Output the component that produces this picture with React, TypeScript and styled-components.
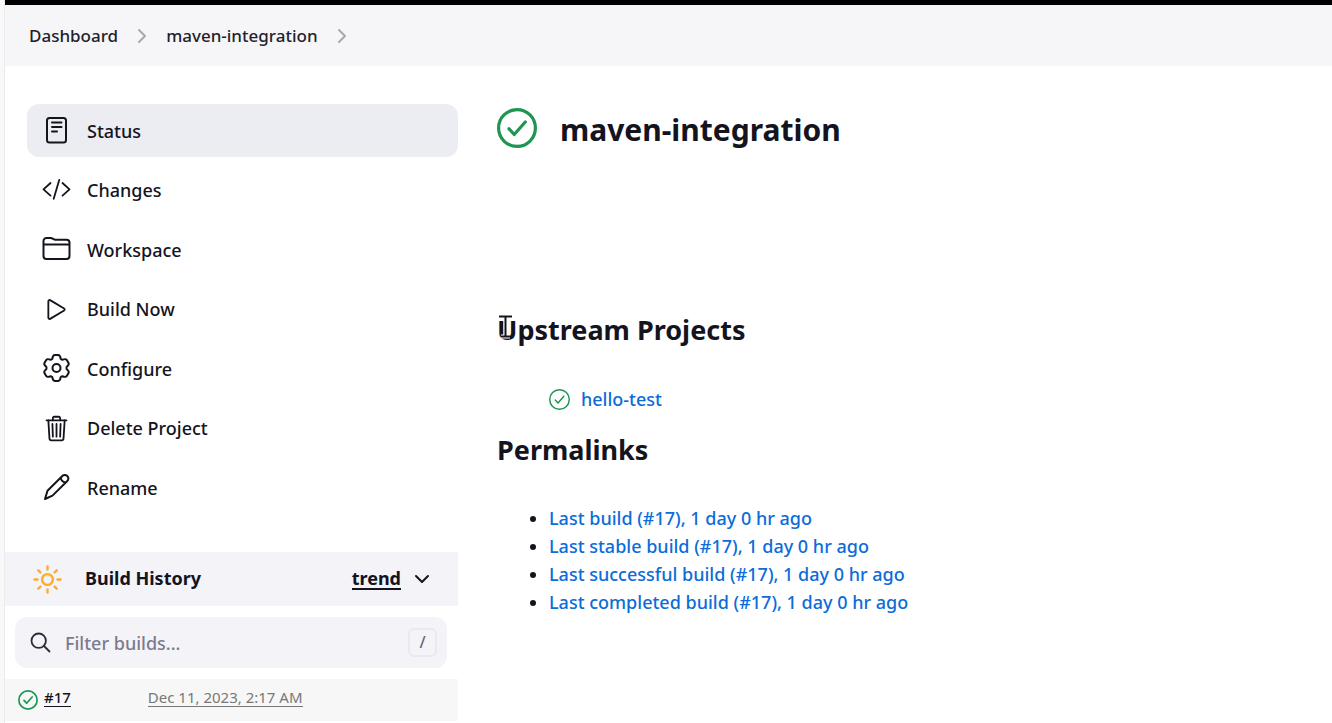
import React from "react";
import styled, { createGlobalStyle } from "styled-components";
import { IoTrashOutline, IoPlayOutline } from "react-icons/io5";

const Global = createGlobalStyle`
  * { box-sizing: border-box; }
  body {
    margin: 0;
    background: #fff;
    color: #14141f;
    font-family: "Noto Sans", "Open Sans", sans-serif;
    font-size: 18px;
    font-weight: 500;
    line-height: 28px;
  }
  a { color: inherit; text-decoration: none; }
  h1, h2, ul { margin: 0; padding: 0; }
`;

const Page = styled.div`
  min-height: 100vh;
  border-left: 4px solid #f8f8f8;
  box-shadow: inset 1px 0 #ebebeb;
  padding-left: 1px;
`;

const TopBar = styled.header`
  height: 5px;
  background: #000;
`;

const Breadcrumbs = styled.nav`
  display: flex;
  align-items: center;
  height: 61px;
  padding: 0 24px;
  background: #f6f6f8;
  color: #22222c;
  font-size: 17px;
  svg { margin: 0 18px; }
`;

const Columns = styled.div`
  display: flex;
`;

const Sidebar = styled.aside`
  flex: 0 0 453px;
  padding-top: 38px;
`;

const Tasks = styled.nav`
  display: flex;
  flex-direction: column;
  justify-content: space-between;
  min-height: 410px;
  margin: 0 0 38px 22px;
`;

const Task = styled.a<{ $active?: boolean }>`
  display: flex;
  align-items: center;
  gap: 16px;
  height: 53px;
  padding: 0 15px;
  border-radius: 12px;
  background: ${(p) => (p.$active ? "#ecedf3" : "transparent")};
  svg { width: 29px; height: 29px; }
`;

const HistoryHeader = styled.div`
  display: flex;
  align-items: center;
  height: 54px;
  padding: 0 28px;
  background: #f3f3f8;
  font-weight: 700;
`;

const HistoryTitle = styled.h2`
  flex: 1;
  margin-left: 23px;
  padding-bottom: 2px;
  font-size: 18px;
`;

const Trend = styled.a`
  margin-right: 13px;
  line-height: 20px;
  border-bottom: 2px solid #14141f;
`;

const IconButton = styled.button`
  display: flex;
  padding: 0;
  border: 0;
  background: none;
  color: inherit;
`;

const Search = styled.label`
  display: flex;
  align-items: center;
  height: 51px;
  margin: 11px 11px 11px 10px;
  padding: 0 10px 0 15px;
  border-radius: 12px;
  background: #f3f3f8;
`;

const SearchInput = styled.input`
  flex: 1;
  min-width: 0;
  margin-left: 14px;
  padding: 0;
  border: 0;
  outline: 0;
  background: none;
  color: inherit;
  font: inherit;
  &::placeholder { color: #7b7b8e; opacity: 1; }
`;

const Key = styled.kbd`
  width: 29px;
  height: 29px;
  border: 2px solid #e9e9f0;
  border-radius: 6px;
  color: #66667a;
  font: inherit;
  font-size: 16px;
  line-height: 25px;
  text-align: center;
`;

const BuildRow = styled.div`
  display: flex;
  align-items: center;
  height: 42px;
  padding: 0 13px;
  background: #f7f7f7;
  font-size: 15px;
`;

const BuildLink = styled.a<{ $muted?: boolean }>`
  margin: 0 0 6px ${(p) => (p.$muted ? 77 : 6)}px;
  color: ${(p) => (p.$muted ? "#777" : "#14141f")};
  font-weight: ${(p) => (p.$muted ? 400 : 500)};
  line-height: 18px;
  border-bottom: 1px solid currentColor;
`;

const Main = styled.main`
  flex: 1;
  min-width: 0;
  padding: 40px 39px 0;
`;

const Title = styled.h1`
  display: flex;
  align-items: center;
  gap: 23px;
  height: 44px;
  margin-bottom: 158px;
  font-size: 30px;
  line-height: 44px;
`;

const TitleText = styled.span`
  padding-top: 4px;
`;

const Heading = styled.h2`
  position: relative;
  font-size: 27px;
  line-height: 44px;
`;

const Cursor = styled.svg`
  position: absolute;
  left: 1px;
  top: 7px;
`;

const Upstream = styled.ul`
  margin: 33px 0 15px 52px;
  list-style: none;
`;

const UpstreamItem = styled.li`
  display: flex;
  align-items: center;
  gap: 11px;
  color: #0b6cda;
`;

const Permalinks = styled.ul`
  margin-top: 32px;
  padding-left: 52px;
  a { color: #0b6cda; }
`;

const ok = "#1e9552";

const CheckCircle = ({ size, stroke }: { size: number; stroke: number }) => (
  <svg width={size} height={size} viewBox="0 0 40 40" fill="none" stroke={ok} strokeWidth={stroke} strokeLinecap="round" strokeLinejoin="round" aria-hidden="true">
    <circle cx="20" cy="20" r={20 - stroke / 2} />
    <path d="M12 20.800L17.200 26.500 28.300 14" />
  </svg>
);

const Crumb = () => (
  <svg width="12" height="16" viewBox="0 0 12 16" fill="none" stroke="#a9a9ad" strokeWidth="2" strokeLinecap="round" strokeLinejoin="round" aria-hidden="true">
    <path d="M3 2l6 6-6 6" />
  </svg>
);

const line = { viewBox: "0 0 29 29", fill: "none", stroke: "currentColor", strokeWidth: 2, strokeLinecap: "round", strokeLinejoin: "round" } as const;

const StatusIcon = () => (
  <svg {...line} aria-hidden="true">
    <rect x="5" y="2" width="19" height="24.500" rx="2.500" />
    <path d="M10 6.500h9.500M10 11h9.500M10 15.500h5" />
  </svg>
);
const CodeIcon = () => (
  <svg {...line} strokeWidth={1.8} aria-hidden="true">
    <path d="M8.500 7L1.500 13.300l7 6.300M20.500 7l7 6.300-7 6.300M17.300 3.800l-5.600 19" />
  </svg>
);
const FolderIcon = () => (
  <svg {...line} aria-hidden="true">
    <path d="M1.500 9.500V6a3 3 0 0 1 3-3h4.200c.8 0 1.500.2 2.100.7l.6.400c.6.500 1.300.7 2.100.7h11a3 3 0 0 1 3 3V21a3 3 0 0 1-3 3h-20a3 3 0 0 1-3-3V9.500h26" />
  </svg>
);

/* One tooth of the gear, pointing up from the centre; six of them close the outline. */
const tooth = [[-4.2, -9.2], [-3.6, -12.9], [-1.8, -12.9], [1.8, -12.9], [3.6, -12.9], [4.2, -9.2]];
const gear = Array.from({ length: 6 }, (_, k) => {
  const a = (k * Math.PI) / 3;
  const [p0, p1, p2, p3, p4, p5] = tooth.map(([x, y]) =>
    [14.5 + x * Math.cos(a) - y * Math.sin(a), 14 + x * Math.sin(a) + y * Math.cos(a)].map((n) => n.toFixed(2)).join(" ")
  );
  return `${k ? "L" : "M"}${p0}Q${p1} ${p2}L${p3}Q${p4} ${p5}`;
}).join("") + "Z";

const GearIcon = () => (
  <svg {...line} aria-hidden="true">
    <path d={gear} />
    <circle cx="14.500" cy="14" r="4" />
  </svg>
);
const PencilIcon = () => (
  <svg {...line} aria-hidden="true">
    <path d="M3 26l2.500-8.300L20.300 3a3.500 3.500 0 0 1 5 0 3.500 3.500 0 0 1 0 5L10.500 22.600 3 26zM18.800 4.800c.4 2.500 1.800 4 4.500 4.600" />
  </svg>
);

const tasks = [
  { label: "Status", icon: <StatusIcon /> },
  { label: "Changes", icon: <CodeIcon /> },
  { label: "Workspace", icon: <FolderIcon /> },
  { label: "Build Now", icon: <IoPlayOutline /> },
  { label: "Configure", icon: <GearIcon /> },
  { label: "Delete Project", icon: <IoTrashOutline /> },
  { label: "Rename", icon: <PencilIcon /> },
];

const permalinks = ["Last build", "Last stable build", "Last successful build", "Last completed build"];

const beam = "M1 1.500h13M7.500 2v19M3 21.500h9";

export default function App() {
  return (
    <>
      <Global />
      <Page>
        <TopBar />
        <Breadcrumbs aria-label="Breadcrumb">
          <a href="#dashboard">Dashboard</a>
          <Crumb />
          <a href="#project">maven-integration</a>
          <Crumb />
        </Breadcrumbs>
        <Columns>
          <Sidebar>
            <Tasks>
              {tasks.map((t, i) => (
                <Task key={t.label} href="#task" $active={i === 0}>
                  {t.icon}
                  {t.label}
                </Task>
              ))}
            </Tasks>
            <HistoryHeader>
              <svg width="29" height="29" viewBox="0 0 29 29" fill="none" stroke="#fcad2b" strokeWidth="2.400" strokeLinecap="round" aria-hidden="true">
                <circle cx="14.500" cy="14.500" r="5.400" />
                <path d="M14.500 1.500v3M14.500 24.500v3M1.500 14.500h3M24.500 14.500h3M5.300 5.300l2.100 2.100M21.600 21.600l2.100 2.100M5.300 23.700l2.100-2.100M21.600 7.400l2.100-2.100" />
              </svg>
              <HistoryTitle>Build History</HistoryTitle>
              <Trend href="#trend">trend</Trend>
              <IconButton aria-label="Collapse build history">
                <svg width="16" height="16" viewBox="0 0 16 16" fill="none" stroke="currentColor" strokeWidth="2" strokeLinecap="round" strokeLinejoin="round">
                  <path d="M2 5l6 6 6-6" />
                </svg>
              </IconButton>
            </HistoryHeader>
            <Search>
              <svg width="21" height="21" viewBox="0 0 21 21" fill="none" stroke="#2c2c38" strokeWidth="1.800" strokeLinecap="round" aria-hidden="true">
                <circle cx="8.700" cy="8.700" r="7.200" />
                <path d="M14 14l5.500 5.500" />
              </svg>
              <SearchInput type="text" aria-label="Filter builds" placeholder="Filter builds..." />
              <Key>/</Key>
            </Search>
            <BuildRow>
              <CheckCircle size={20} stroke={3.4} />
              <BuildLink href="#17">#17</BuildLink>
              <BuildLink href="#17" $muted>Dec 11, 2023, 2:17 AM</BuildLink>
            </BuildRow>
          </Sidebar>
          <Main>
            <Title>
              <CheckCircle size={40} stroke={3.2} />
              <TitleText>maven-integration</TitleText>
            </Title>
            <Heading>
              Upstream Projects
              <Cursor width="15" height="24" viewBox="0 0 15 24" fill="none" aria-hidden="true">
                <path d={beam} stroke="#fff" strokeWidth="4" />
                <path d={beam} stroke="#14141f" strokeWidth="2" />
              </Cursor>
            </Heading>
            <Upstream>
              <UpstreamItem>
                <CheckCircle size={21} stroke={2.8} />
                <a href="#hello-test">hello-test</a>
              </UpstreamItem>
            </Upstream>
            <Heading>Permalinks</Heading>
            <Permalinks>
              {permalinks.map((p) => (
                <li key={p}>
                  <a href="#17">{p} (#17), 1 day 0 hr ago</a>
                </li>
              ))}
            </Permalinks>
          </Main>
        </Columns>
      </Page>
    </>
  );
}
